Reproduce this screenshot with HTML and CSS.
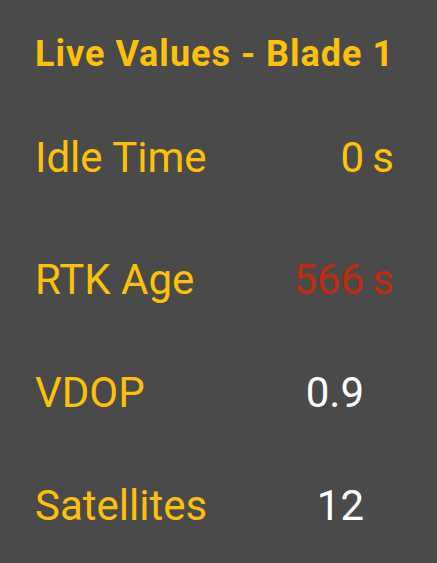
FILE: index.html
```html
<!DOCTYPE html>
<html lang="en">
<head>
    <meta charset="UTF-8">
    <meta name="viewport" content="width=device-width, initial-scale=1.0">
    <title>Live Values</title>
    <link rel="stylesheet" href="styles.css">
</head>
<body>
    <div class="panel">
        <h1 class="panel-title">Live Values - Blade 1</h1>

        <div class="value-list">
            <div class="value-row first">
                <span class="label">Idle Time</span>
                <span class="value">0</span>
                <span class="unit">s</span>
            </div>
            <div class="value-row">
                <span class="label">RTK Age</span>
                <span class="value alarm">566</span>
                <span class="unit alarm">s</span>
            </div>
            <div class="value-row">
                <span class="label">VDOP</span>
                <span class="value plain">0.9</span>
                <span class="unit"></span>
            </div>
            <div class="value-row">
                <span class="label">Satellites</span>
                <span class="value plain">12</span>
                <span class="unit"></span>
            </div>
        </div>
    </div>
</body>
</html>
```

FILE: styles.css
```css
body {
    margin: 0;
    background-color: #4a4a4a;
    font-family: Roboto, "Liberation Sans", sans-serif;
    color: #ffc107;
}

.panel {
    padding: 33px 43px 0 35px;
}

.panel-title {
    margin: 0;
    font-size: 36px;
    font-weight: bold;
    letter-spacing: 1px;
    line-height: 42px;
    white-space: nowrap;
}

.value-list {
    display: flex;
    flex-direction: column;
    gap: 64px;
    margin-top: 58px;
}

.value-row {
    display: grid;
    grid-template-columns: 1fr auto 30px;
    font-size: 42px;
    line-height: 49px;
}

.value-row.first {
    margin-bottom: 9px;
}

.value {
    text-align: right;
}

.unit {
    text-align: right;
}

.plain {
    color: #ffffff;
}

.alarm {
    color: #c42a0c;
}
```
